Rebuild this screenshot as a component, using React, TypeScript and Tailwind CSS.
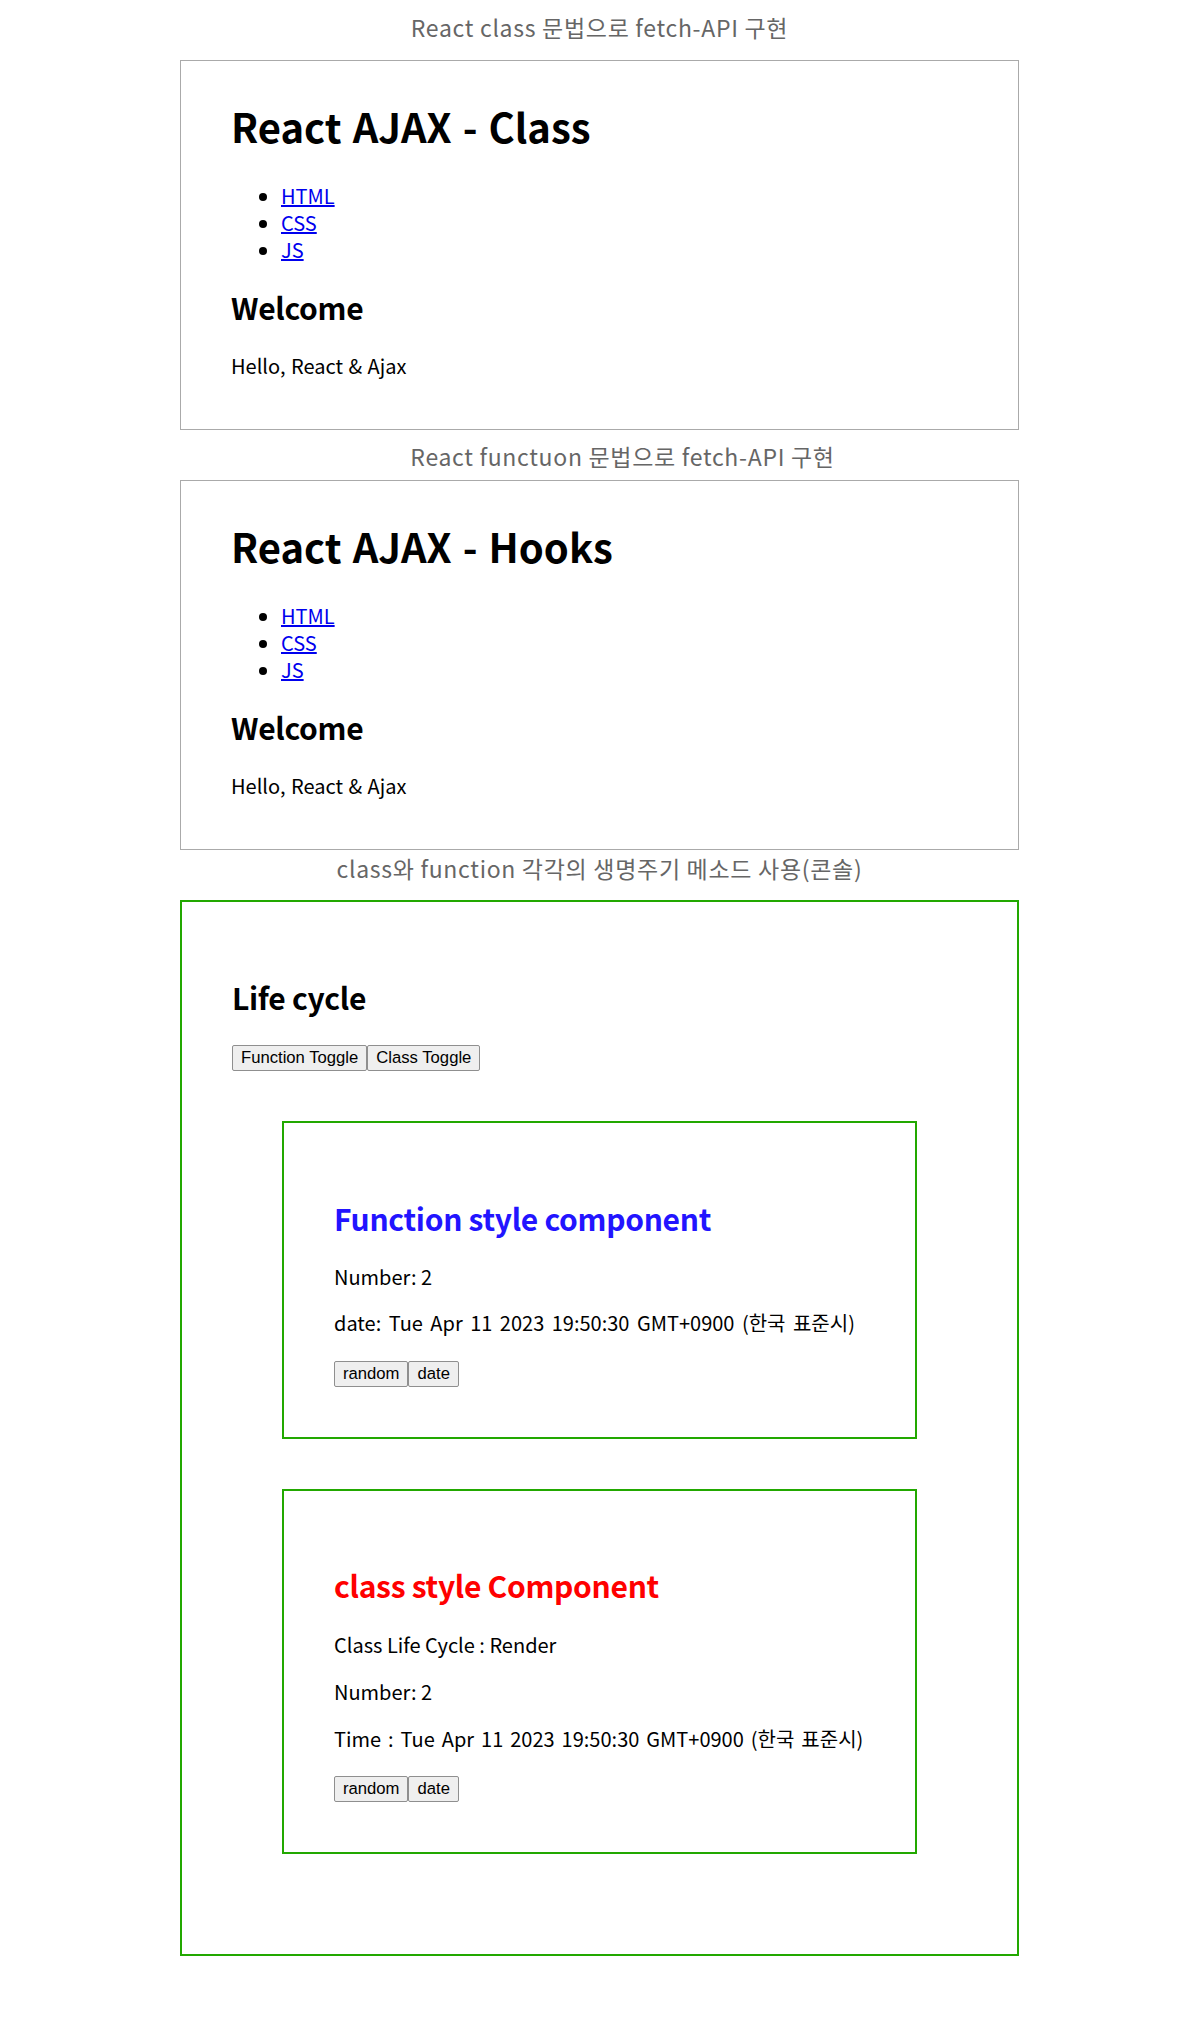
const topics = ["HTML", "CSS", "JS"];
const dateText = "Tue Apr 11 2023 19:50:30 GMT+0900 (한국 표준시)";

function Caption({ children, className }: { children: React.ReactNode; className: string }) {
  return (
    <div className={`text-center text-[23px] leading-[30px] tracking-[0.7px] text-[#666] ${className}`}>
      {children}
    </div>
  );
}

function AjaxBox({ title }: { title: string }) {
  return (
    <div className="border border-[#aaa] px-[50px] pb-[50px]">
      <h1 className="mt-[41px] text-[40px] leading-[48px] font-bold [word-spacing:2px]">{title}</h1>
      <ul className="mt-[32px] list-disc pl-[50px] text-[20px] leading-[27px]">
        {topics.map((t) => (
          <li key={t}>
            <a href="#" className="text-[#0000ee] underline">
              {t}
            </a>
          </li>
        ))}
      </ul>
      <h2 className="mt-[26px] text-[30px] leading-[36px] font-bold tracking-[-0.3px]">Welcome</h2>
      <p className="mt-[27px] text-[20px] leading-[27px] [word-spacing:1px]">Hello, React &amp; Ajax</p>
    </div>
  );
}

function Btn({ children }: { children: React.ReactNode }) {
  return (
    <button className="h-[26px] px-[8px] bg-[#efefef] border border-[#8f8f8f] rounded-[2px] font-['Liberation_Sans',Arial,sans-serif] text-[16.67px] leading-[20px] text-black">
      {children}
    </button>
  );
}

function FuncComp() {
  return (
    <div className="mx-[50px] mt-[50px] border-2 border-[#22a800] p-[50px]">
      <h2 className="mt-[27px] text-[30px] leading-[36px] font-bold tracking-[-0.3px] text-[#2214ff]">Function style component</h2>
      <p className="mt-[27px] text-[20px] leading-[27px]">Number: 2</p>
      <p className="mt-[19px] text-[20px] leading-[27px] [word-spacing:3px]">date: {dateText}</p>
      <div className="mt-[25px] flex">
        <Btn>random</Btn>
        <Btn>date</Btn>
      </div>
    </div>
  );
}

function ClassComp() {
  return (
    <div className="mx-[50px] my-[50px] border-2 border-[#22a800] p-[50px]">
      <h2 className="mt-[26px] text-[30px] leading-[36px] font-bold tracking-[-0.3px] text-[#ff0000]">class style Component</h2>
      <p className="mt-[28px] text-[20px] leading-[27px]">Class Life Cycle : Render</p>
      <p className="mt-[20px] text-[20px] leading-[27px]">Number: 2</p>
      <p className="mt-[20px] text-[20px] leading-[27px] [word-spacing:2.5px]">Time : {dateText}</p>
      <div className="mt-[24px] flex">
        <Btn>random</Btn>
        <Btn>date</Btn>
      </div>
    </div>
  );
}

export default function App() {
  return (
    <div className="bg-white text-black font-['Noto_Sans_CJK_KR','Noto_Sans',sans-serif]">
      <div className="ml-[180px] w-[839px] pb-[61px]">
        <Caption className="h-[60px] pt-[12px]">React class 문법으로 fetch-API 구현</Caption>
        <AjaxBox title="React AJAX - Class" />
        <Caption className="h-[50px] pt-[11px] pl-[46px]">React functuon 문법으로 fetch-API 구현</Caption>
        <AjaxBox title="React AJAX - Hooks" />
        <Caption className="h-[50px] pt-[3px]">class와 function 각각의 생명주기 메소드 사용(콘솔)</Caption>

        <div className="border-2 border-[#22a800] pt-[50px] px-[50px] pb-[50px]">
          <h2 className="mt-[27px] text-[30px] leading-[36px] font-bold tracking-[-0.3px]">Life cycle</h2>
          <div className="mt-[30px] flex">
            <Btn>Function Toggle</Btn>
            <Btn>Class Toggle</Btn>
          </div>
          <FuncComp />
          <ClassComp />
        </div>
      </div>
    </div>
  );
}
